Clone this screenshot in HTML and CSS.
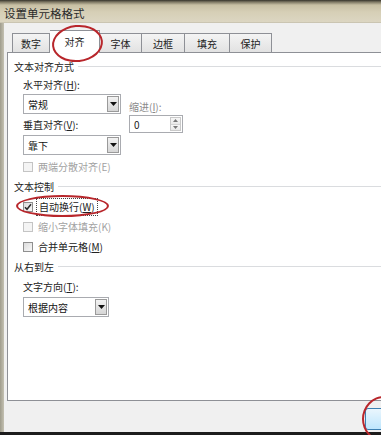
FILE: index.html
```html
<!DOCTYPE html>
<html lang="zh-CN">
<head>
<meta charset="utf-8">
<title>设置单元格格式</title>
<link rel="stylesheet" href="styles.css">
</head>
<body>
<div class="win">
  <div class="titlebar"><span class="title">设置单元格格式</span></div>
  <div class="main">
    <div class="frame"></div>
    <div class="client">
      <div class="tabs">
        <div class="tab w38">数字</div>
        <div class="tab sel">对齐</div>
        <div class="tab w42">字体</div>
        <div class="tab w43">边框</div>
        <div class="tab w45">填充</div>
        <div class="tab w42">保护</div>
      </div>
      <div class="panel">
        <div class="group-head"><span>文本对齐方式</span><i class="rule"></i></div>
        <div class="align-row">
          <div class="col-left">
            <div class="label">水平对齐(<u>H</u>):</div>
            <div class="combo c1"><span class="val">常规</span><span class="drop"><svg width="7" height="4" viewBox="0 0 7 4"><path d="M0 0H7L3.5 4Z" fill="#111"/></svg></span></div>
            <div class="label l2">垂直对齐(<u>V</u>):</div>
            <div class="combo c2"><span class="val">靠下</span><span class="drop"><svg width="7" height="4" viewBox="0 0 7 4"><path d="M0 0H7L3.5 4Z" fill="#111"/></svg></span></div>
          </div>
          <div class="col-right">
            <div class="label dim-label">缩进(<u>I</u>):</div>
            <div class="spin"><span class="val">0</span><span class="spin-btns"><span class="sb"><svg width="5" height="3" viewBox="0 0 5 3"><path d="M0 3H5L2.5 0Z" fill="#777"/></svg></span><span class="sb"><svg width="5" height="3" viewBox="0 0 5 3"><path d="M0 0H5L2.5 3Z" fill="#777"/></svg></span></span></div>
          </div>
        </div>
        <div class="check disabled r-dist"><span class="box"></span><span class="txt">两端分散对齐(E)</span></div>

        <div class="group-head g2"><span>文本控制</span><i class="rule"></i></div>
        <div class="check r-first"><span class="box"><svg width="8" height="8" viewBox="0 0 8 8"><path d="M1 4.2L3 6.3L7 1.2" fill="none" stroke="#2a2a2a" stroke-width="1.5"/></svg></span><span class="txt focus">自动换行(<u>W</u>)</span></div>
        <div class="check disabled"><span class="box"></span><span class="txt">缩小字体填充(K)</span></div>
        <div class="check"><span class="box"></span><span class="txt">合并单元格(<u>M</u>)</span></div>

        <div class="group-head g3"><span>从右到左</span><i class="rule"></i></div>
        <div class="label l3">文字方向(<u>T</u>):</div>
        <div class="combo c3"><span class="val">根据内容</span><span class="drop"><svg width="7" height="4" viewBox="0 0 7 4"><path d="M0 0H7L3.5 4Z" fill="#111"/></svg></span></div>
      </div>
      <div class="footer"><div class="btn"></div></div>
    </div>
  </div>
  <div class="bottom-edge"></div>
  <div class="mark m1"></div>
  <div class="mark m2"></div>
  <div class="mark m3"></div>
</div>
</body>
</html>
```

FILE: styles.css
```css
* { box-sizing: border-box; }
html, body { margin: 0; padding: 0; }
body {
  width: 381px;
  height: 435px;
  overflow: hidden;
  font-family: "Noto Sans CJK SC", "Noto Sans", sans-serif;
  font-size: 10px;
  color: #1f1f1f;
  background: #f0f0f0;
}
u { text-decoration: underline; text-underline-offset: 1px; }

.win {
  position: relative;
  width: 381px;
  height: 435px;
  display: flex;
  flex-direction: column;
  overflow: hidden;
}

.titlebar {
  height: 23px;
  flex: none;
  background: linear-gradient(#34322a 0px, #7d7763 2px, #c8c0a4 5px, #d6cfb6 12px, #dcd6c2 22px, #b9b4a2 23px);
  display: flex;
  align-items: center;
  padding-left: 4px;
}
.title {
  font-size: 11.5px;
  color: #2a2a2a;
  line-height: 14px;
  padding-top: 2px;
}

.main {
  flex: 1;
  display: flex;
  min-height: 0;
}
.frame {
  width: 4px;
  flex: none;
  background: linear-gradient(90deg, #9f9c8c, #c4c1b2);
}
.client {
  flex: 1;
  min-width: 0;
  padding-left: 3px;
  background: #f0f0f0;
  display: flex;
  flex-direction: column;
  overflow: hidden;
}

.tabs {
  height: 29px;
  flex: none;
  display: flex;
  align-items: flex-end;
  padding-left: 5px;
  position: relative;
  z-index: 2;
}
.tab {
  height: 19px;
  border: 1px solid #8e9096;
  border-bottom: none;
  border-left: none;
  background: linear-gradient(#f4f4f4, #e2e2e2);
  display: flex;
  align-items: center;
  justify-content: center;
  line-height: 12px;
  color: #222;
  padding-top: 1px;
}
.tab:first-child { border-left: 1px solid #8e9096; }
.w38 { width: 38px; }
.w42 { width: 42px; }
.w43 { width: 43px; }
.w45 { width: 45px; }
.tab.sel {
  width: 50px;
  height: 23px;
  margin-bottom: -1px;
  background: #ffffff;
  border-left: none;
  padding-bottom: 2px;
}

.panel {
  width: 420px;
  height: 349px;
  flex: none;
  border: 1px solid #8e9096;
  background: #ffffff;
  padding: 7px 0 0 6px;
  display: flex;
  flex-direction: column;
  align-items: flex-start;
}

.group-head {
  height: 14px;
  width: 100%;
  display: flex;
  align-items: center;
  line-height: 14px;
  color: #222;
}
.group-head .rule {
  flex: 1;
  height: 1px;
  margin-left: 4px;
  margin-top: -1px;
  background: #dadcdf;
}
.g2 { margin-top: 6px; }
.g3 { margin-top: 6px; }

.label {
  height: 14px;
  line-height: 14px;
  color: #222;
  white-space: nowrap;
}
.align-row {
  display: flex;
  margin-top: 4px;
  margin-left: 9px;
}
.col-left {
  width: 98px;
  display: flex;
  flex-direction: column;
}
.col-right {
  margin-left: 8px;
  padding-top: 22px;
  display: flex;
  flex-direction: column;
}
.dim-label { color: #8a8a8a; }
.l2 { margin-top: 4px; }
.l3 { margin-top: 6px; margin-left: 9px; }

.combo {
  height: 20px;
  border: 1px solid #a9abb0;
  background: #fff;
  display: flex;
  align-items: center;
  justify-content: space-between;
  padding-left: 4px;
  padding-right: 1px;
  color: #111;
}
.c1 { margin-top: 2px; width: 98px; }
.c2 { margin-top: 3px; width: 98px; }
.c3 { margin-top: 3px; margin-left: 9px; width: 86px; }
.combo .val { line-height: 14px; padding-top: 1px; }
.drop {
  width: 12px;
  height: 16px;
  border: 1px solid #9a9a9a;
  background: linear-gradient(#f2f2f2, #d6d6d6);
  display: flex;
  align-items: center;
  justify-content: center;
}

.spin {
  margin-top: 1px;
  width: 54px;
  height: 18px;
  border: 1px solid #a9abb0;
  background: #fff;
  display: flex;
  align-items: center;
  justify-content: space-between;
  padding-left: 4px;
  padding-right: 1px;
  color: #222;
}
.spin-btns {
  width: 11px;
  height: 14px;
  display: flex;
  flex-direction: column;
  border: 1px solid #c9c9c9;
}
.sb {
  flex: 1;
  display: flex;
  align-items: center;
  justify-content: center;
  background: linear-gradient(#f7f7f7, #e9e9e9);
}
.sb + .sb { border-top: 1px solid #d4d4d4; }

.check {
  height: 14px;
  display: flex;
  align-items: center;
  margin-left: 9px;
  margin-top: 6px;
  line-height: 14px;
  white-space: nowrap;
}
.r-dist { margin-top: 5px; }
.check .box {
  width: 10px;
  height: 10px;
  border: 1px solid #8f8f8f;
  background: linear-gradient(135deg, #dcdcdc, #f8f8f8);
  display: flex;
  align-items: center;
  justify-content: center;
  flex: none;
}
.check .txt { margin-left: 5px; color: #222; }
.check.disabled .box { border-color: #c4c4c4; background: #f4f4f4; }
.check.disabled .txt { color: #a2a2a2; }
.focus {
  outline: 1px dotted #444;
  outline-offset: 1px;
  padding: 0 1px;
}

.footer {
  flex: 1;
  position: relative;
  background: #f0f0f0;
}
.btn {
  position: absolute;
  left: 358px;
  top: 7px;
  width: 40px;
  height: 22px;
  border: 1px solid #3c7fb1;
  border-radius: 3px;
  background: linear-gradient(#eaf6fd, #bee6fd);
}

.bottom-edge {
  height: 3px;
  flex: none;
  background: #1c1c1c;
}

.mark {
  position: absolute;
  border: 2px solid #b8262b;
  border-radius: 50%;
  pointer-events: none;
  z-index: 5;
}
.m1 {
  left: 52px;
  top: 25px;
  width: 51px;
  height: 37px;
  transform: rotate(-6deg);
}
.m2 {
  left: 16px;
  top: 195px;
  width: 93px;
  height: 22px;
  border-width: 2.5px;
}
.m3 {
  left: 362px;
  top: 396px;
  width: 44px;
  height: 46px;
  border-width: 2.5px;
}
```
